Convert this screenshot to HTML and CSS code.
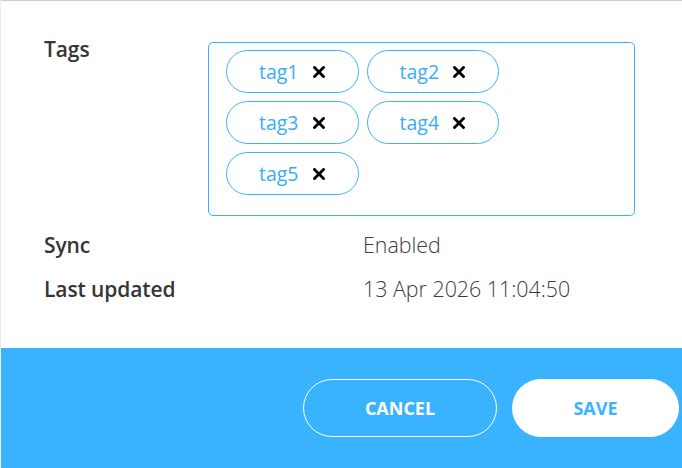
FILE: index.html
```html
<!DOCTYPE html>
<html lang="en">
<head>
<meta charset="utf-8">
<title>Details</title>
<link rel="stylesheet" href="styles.css">
</head>
<body>
<div class="page">
  <main class="content">
    <div class="row row-tags">
      <div class="label label-tags">Tags</div>
      <div class="tag-box">
        <span class="chip"><span class="chip-text">tag1</span><svg class="chip-x" viewBox="0 0 12 12" aria-hidden="true"><path d="M1.5 1.5 L10.5 10.5 M10.5 1.5 L1.5 10.5"/></svg></span>
        <span class="chip"><span class="chip-text">tag2</span><svg class="chip-x" viewBox="0 0 12 12" aria-hidden="true"><path d="M1.5 1.5 L10.5 10.5 M10.5 1.5 L1.5 10.5"/></svg></span>
        <span class="chip"><span class="chip-text">tag3</span><svg class="chip-x" viewBox="0 0 12 12" aria-hidden="true"><path d="M1.5 1.5 L10.5 10.5 M10.5 1.5 L1.5 10.5"/></svg></span>
        <span class="chip"><span class="chip-text">tag4</span><svg class="chip-x" viewBox="0 0 12 12" aria-hidden="true"><path d="M1.5 1.5 L10.5 10.5 M10.5 1.5 L1.5 10.5"/></svg></span>
        <span class="chip"><span class="chip-text">tag5</span><svg class="chip-x" viewBox="0 0 12 12" aria-hidden="true"><path d="M1.5 1.5 L10.5 10.5 M10.5 1.5 L1.5 10.5"/></svg></span>
      </div>
    </div>
    <div class="info">
      <div class="row">
        <div class="label label-info">Sync</div>
        <div class="value">Enabled</div>
      </div>
      <div class="row">
        <div class="label label-info">Last updated</div>
        <div class="value">13 Apr 2026 11:04:50</div>
      </div>
    </div>
  </main>
  <footer class="footer">
    <button class="btn btn-cancel" type="button">CANCEL</button>
    <button class="btn btn-save" type="button">SAVE</button>
  </footer>
</div>
</body>
</html>
```
FILE: styles.css
```css
html, body {
  margin: 0;
  padding: 0;
  background: #ffffff;
}

body {
  font-family: "Open Sans", "Noto Sans", "Liberation Sans", sans-serif;
  width: 682px;
  height: 468px;
  overflow: hidden;
}

.page {
  display: flex;
  flex-direction: column;
  height: 468px;
  border-left: 1px solid #ececec;
  box-sizing: border-box;
}

.content {
  flex: 1;
  border-top: 1px solid #cccccc;
  padding: 36px 0 0 43px;
}

.row {
  display: flex;
  align-items: flex-start;
}

.label {
  font-size: 21px;
  line-height: 24px;
  font-weight: 600;
  color: #363636;
  letter-spacing: -0.1px;
}

.label-tags {
  width: 164px;
}

.label-info {
  width: 319px;
}

.tag-box {
  margin-top: 5px;
  width: 427px;
  height: 174px;
  box-sizing: border-box;
  border: 1px solid #3ab2ff;
  border-radius: 5px;
  padding: 7px 17px 20px;
  display: flex;
  flex-wrap: wrap;
  align-content: flex-start;
  gap: 8px;
}

.chip {
  display: inline-flex;
  align-items: center;
  height: 43px;
  box-sizing: border-box;
  border: 1px solid #3ab2ff;
  border-radius: 22px;
  padding: 0 33px 0 32px;
  gap: 14px;
}

.chip-text {
  font-size: 19.5px;
  color: #3aacf8;
}

.chip-x {
  width: 12px;
  height: 12px;
  fill: none;
  stroke: #000000;
  stroke-width: 2.8;
  stroke-linecap: square;
}

.info {
  margin-top: 17px;
  display: flex;
  flex-direction: column;
  gap: 20px;
}

.value {
  font-size: 21.4px;
  line-height: 24px;
  font-weight: 300;
  color: #3c3c3c;
}

.footer {
  height: 120px;
  background: #3ab3ff;
  display: flex;
  justify-content: flex-end;
  align-items: center;
  gap: 15px;
  padding: 0 3px 0 0;
  box-sizing: border-box;
}

.btn {
  height: 58px;
  border-radius: 29px;
  font-family: "Open Sans", "Noto Sans", "Liberation Sans", sans-serif;
  font-size: 18px;
  font-weight: 700;
  cursor: pointer;
}

.btn-cancel {
  width: 194px;
  background: transparent;
  border: 1px solid #ffffff;
  color: #ffffff;
}

.btn-save {
  width: 167px;
  background: #ffffff;
  border: none;
  color: #3ab3ff;
}
```
